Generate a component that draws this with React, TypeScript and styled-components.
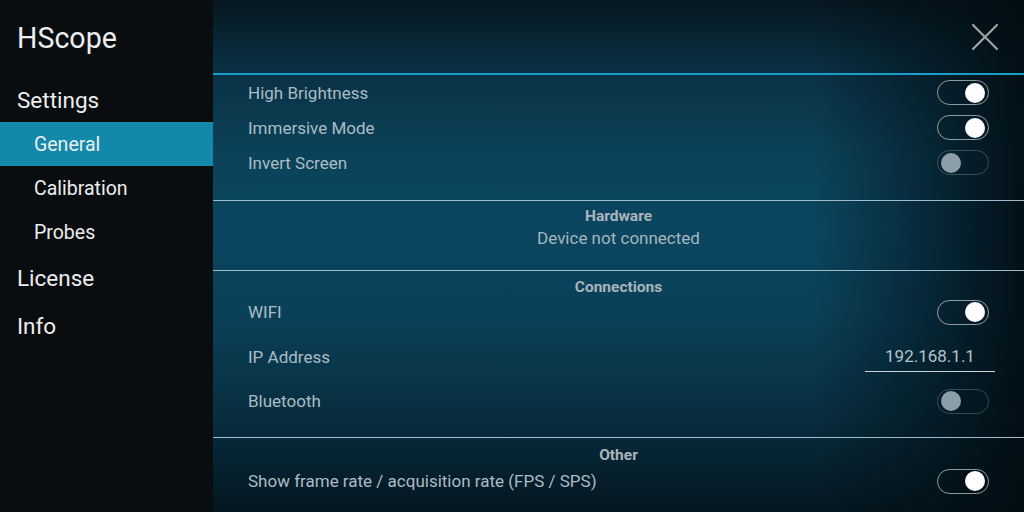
import styled, { createGlobalStyle } from "styled-components";

const GlobalStyle = createGlobalStyle`
  html, body {
    margin: 0;
    padding: 0;
    width: 1024px;
    height: 512px;
    overflow: hidden;
    background: #0a0d0f;
  }
  * {
    box-sizing: border-box;
  }
`;

interface IRow {
  label: string;
  height: number;
  control: "on" | "off" | "ip";
}

const generalRows: IRow[] = [
  { label: "High Brightness", height: 35, control: "on" },
  { label: "Immersive Mode", height: 35, control: "on" },
  { label: "Invert Screen", height: 35, control: "off" },
];

const connectionRows: IRow[] = [
  { label: "WIFI", height: 30, control: "on" },
  { label: "IP Address", height: 60, control: "ip" },
  { label: "Bluetooth", height: 28, control: "off" },
];

function Toggle({ on }: { on: boolean }) {
  return (
    <Switch $on={on}>
      <Knob $on={on} />
    </Switch>
  );
}

function SettingRow({ row }: { row: IRow }) {
  return (
    <Row $h={row.height}>
      <RowLabel>{row.label}</RowLabel>
      {row.control === "ip" ? (
        <IpField>192.168.1.1</IpField>
      ) : (
        <Toggle on={row.control === "on"} />
      )}
    </Row>
  );
}

function App() {
  return (
    <Screen>
      <GlobalStyle />
      <Sidebar>
        <AppTitle>HScope</AppTitle>
        <NavTop $h={44}>Settings</NavTop>
        <NavSub $active>General</NavSub>
        <NavSub>Calibration</NavSub>
        <NavSub>Probes</NavSub>
        <NavTop $h={48}>License</NavTop>
        <NavTop $h={48}>Info</NavTop>
      </Sidebar>
      <Main>
        <Header>
          <CloseButton type="button">
            <svg width="26" height="26" viewBox="0 0 26 26">
              <path
                d="M1 1 L25 25 M25 1 L1 25"
                stroke="#9ca3a7"
                strokeWidth="2.2"
                strokeLinecap="round"
              />
            </svg>
          </CloseButton>
        </Header>
        <Section $pt={0} $pb={20}>
          {generalRows.map((row) => (
            <SettingRow key={row.label} row={row} />
          ))}
        </Section>
        <Divider />
        <Section $pt={5} $pb={20}>
          <SectionTitle>Hardware</SectionTitle>
          <StatusText>Device not connected</StatusText>
        </Section>
        <Divider />
        <Section $pt={6} $pb={22}>
          <SectionTitle>Connections</SectionTitle>
          {connectionRows.map((row) => (
            <SettingRow key={row.label} row={row} />
          ))}
        </Section>
        <Divider />
        <Section $pt={7} $pb={0}>
          <SectionTitle>Other</SectionTitle>
          <SettingRow
            row={{
              label: "Show frame rate / acquisition rate (FPS / SPS)",
              height: 32,
              control: "on",
            }}
          />
        </Section>
      </Main>
    </Screen>
  );
}

const Screen = styled.div`
  display: flex;
  width: 1024px;
  height: 512px;
  font-family: Roboto, "Liberation Sans", sans-serif;
  overflow: hidden;
`;

const Sidebar = styled.nav`
  width: 213px;
  flex-shrink: 0;
  display: flex;
  flex-direction: column;
  padding-top: 18px;
  background: #0a0d0f;
  color: #eceeef;
`;

const AppTitle = styled.div`
  height: 60px;
  line-height: 40px;
  padding-left: 17px;
  font-size: 28.6px;
`;

const NavTop = styled.div<{ $h: number }>`
  height: ${(p) => p.$h}px;
  display: flex;
  align-items: center;
  padding-left: 17px;
  font-size: 22.5px;
`;

const NavSub = styled.div<{ $active?: boolean }>`
  height: 44px;
  display: flex;
  align-items: center;
  padding-left: 34px;
  font-size: 19.5px;
  background: ${(p) => (p.$active ? "#1288aa" : "transparent")};
`;

const Main = styled.main`
  flex: 1;
  display: flex;
  flex-direction: column;
  color: #abbcc5;
  background:
    linear-gradient(
      to right,
      rgba(2, 12, 18, 0) 0%,
      rgba(2, 12, 18, 0) 74%,
      rgba(2, 12, 18, 0.45) 87%,
      rgba(2, 12, 18, 0.93) 100%
    ),
    linear-gradient(
      to bottom,
      #06161f 0%,
      #0a3144 14%,
      #0b4259 30%,
      #0b4560 45%,
      #0a4058 62%,
      #082d3e 82%,
      #041620 100%
    );
`;

const Header = styled.header`
  height: 75px;
  flex-shrink: 0;
  display: flex;
  justify-content: flex-end;
  align-items: flex-start;
  padding: 24px 26px 0 0;
  border-bottom: 2px solid #1a9ec8;
`;

const CloseButton = styled.button`
  width: 26px;
  height: 26px;
  padding: 0;
  border: none;
  background: none;
  display: flex;
`;

const Section = styled.section<{ $pt: number; $pb: number }>`
  display: flex;
  flex-direction: column;
  padding: ${(p) => p.$pt}px 0 ${(p) => p.$pb}px;
`;

const Divider = styled.div`
  height: 1px;
  flex-shrink: 0;
  background: #9fbccb;
`;

const SectionTitle = styled.div`
  text-align: center;
  font-size: 15.5px;
  font-weight: 700;
  line-height: 20px;
  color: #a8b5bc;
`;

const StatusText = styled.div`
  text-align: center;
  font-size: 17px;
  line-height: 24px;
  color: #a6b6be;
`;

const Row = styled.div<{ $h: number }>`
  height: ${(p) => p.$h}px;
  display: flex;
  align-items: center;
  justify-content: space-between;
  padding: 0 35px;
`;

const RowLabel = styled.span`
  font-size: 17px;
  color: #abbcc5;
`;

const Switch = styled.div<{ $on: boolean }>`
  width: 52px;
  height: 25px;
  border-radius: 13px;
  display: flex;
  align-items: center;
  justify-content: ${(p) => (p.$on ? "flex-end" : "flex-start")};
  padding: 0 3px;
  border: 1.5px solid
    ${(p) => (p.$on ? "rgba(214, 222, 226, 0.65)" : "rgba(170, 186, 194, 0.3)")};
`;

const Knob = styled.div<{ $on: boolean }>`
  width: 20px;
  height: 20px;
  border-radius: 50%;
  background: ${(p) => (p.$on ? "#ffffff" : "#8c9ea7")};
`;

const IpField = styled.div`
  width: 130px;
  margin-right: -6px;
  padding-bottom: 5px;
  text-align: center;
  font-size: 17px;
  color: #b4c4cb;
  border-bottom: 1.5px solid #c9d4d9;
  transform: translateY(2px);
`;

export default App;
